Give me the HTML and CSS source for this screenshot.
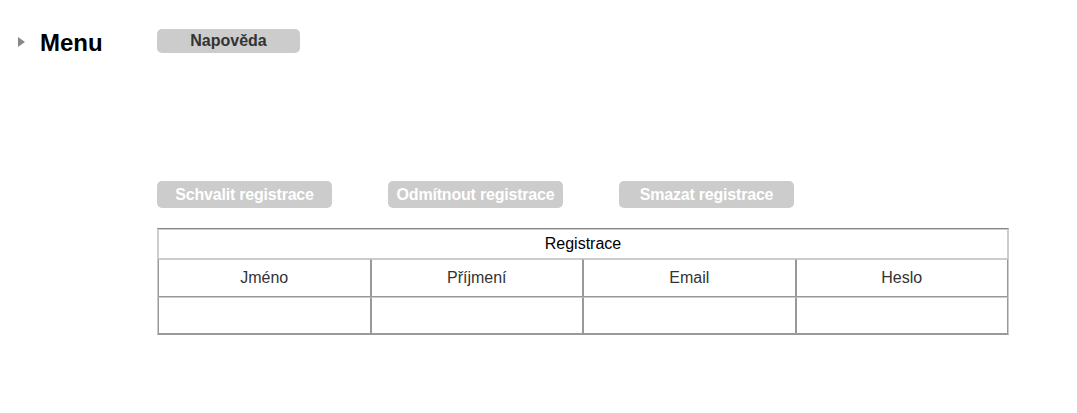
FILE: index.html
```html
<!DOCTYPE html>
<html lang="cs">
<head>
<meta charset="utf-8">
<title>Registrace</title>
<link rel="stylesheet" href="styles.css">
</head>
<body>
<header class="top">
  <div class="menu">
    <span class="arrow"></span>
    <span class="menu-title">Menu</span>
  </div>
  <button class="btn btn-help">Napověda</button>
</header>
<main class="content">
  <div class="actions">
    <button class="btn btn-action">Schvalit registrace</button>
    <button class="btn btn-action">Odmítnout registrace</button>
    <button class="btn btn-action">Smazat registrace</button>
  </div>
  <table class="reg">
    <tr><th colspan="4" class="caption">Registrace</th></tr>
    <tr class="head"><td>Jméno</td><td>Příjmení</td><td>Email</td><td>Heslo</td></tr>
    <tr class="row"><td></td><td></td><td></td><td></td></tr>
  </table>
</main>
</body>
</html>
```

FILE: styles.css
```css
html, body {
  margin: 0;
  padding: 0;
  background: #fff;
  font-family: "Liberation Sans", Arial, sans-serif;
}
.top {
  display: flex;
  align-items: center;
  padding-top: 29px;
  height: 24px;
}
.menu {
  width: 157px;
  display: flex;
  align-items: center;
  padding-left: 18px;
  box-sizing: border-box;
}
.arrow {
  width: 0;
  height: 0;
  border-top: 5.5px solid transparent;
  border-bottom: 5.5px solid transparent;
  border-left: 7px solid #888;
  margin-right: 15px;
  margin-top: 2px;
}
.menu-title {
  font-size: 24px;
  font-weight: bold;
  color: #000;
  margin-top: 3px;
}
.btn {
  border: none;
  background: #ccc;
  border-radius: 5px;
  font-family: "Liberation Sans", Arial, sans-serif;
  font-weight: bold;
  padding: 0;
  cursor: pointer;
}
.btn-help {
  width: 143px;
  height: 24px;
  font-size: 16px;
  color: #333;
}
.content {
  margin-left: 157px;
  padding-top: 128px;
}
.actions {
  display: flex;
  gap: 56px;
}
.btn-action {
  width: 175px;
  height: 27px;
  font-size: 16px;
  color: #fff;
  letter-spacing: -0.2px;
}
.reg {
  margin-top: 20px;
  width: 852px;
  border-collapse: separate;
  border-spacing: 0;
  border: 1px solid;
  border-color: #888 #ccc #999 #ccc;
  font-size: 16px;
}
.reg th, .reg td {
  border: 1px solid;
  border-color: #ccc #999 #999 #999;
  text-align: center;
  padding: 0;
}
.caption {
  font-weight: normal;
  color: #000;
  height: 28px;
  border-color: #ccc #ccc #ccc #ccc !important;
}
.head td {
  height: 36px;
  color: #333;
  width: 25%;
}
.row td {
  height: 35px;
}
```
